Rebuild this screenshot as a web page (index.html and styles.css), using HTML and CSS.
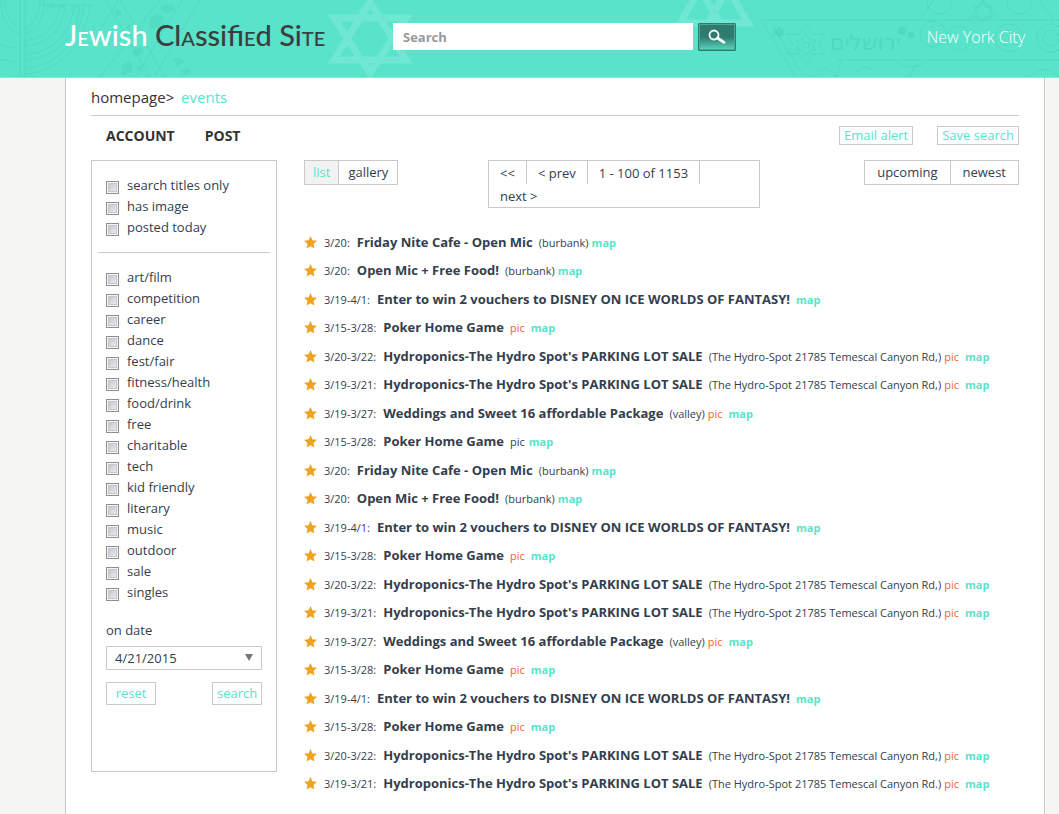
FILE: index.html
```html
<!DOCTYPE html>
<html lang="en">
<head>
<meta charset="utf-8">
<title>Jewish Classified Site</title>
<link rel="stylesheet" href="styles.css">
</head>
<body>
<header class="top">
  <svg class="art art-left" width="420" height="77" viewBox="0 0 420 77" aria-hidden="true">
    <g fill="none" stroke="#43cdb5" stroke-opacity=".35">
      <path d="M20 0v77M25 0v77M1 0c0 20 8 30 19 34M5 0c0 14 6 23 15 28M44 0c0 20-8 30-19 34M40 0c0 14-6 23-15 28M-10 40c8 5 18 8 30 8M25 46c24-2 38-18 40-40M25 41c20-3 33-15 35-35M-10 56c10 4 20 6 30 6M25 60c34-3 52-25 55-55M25 55c30-4 46-22 49-50M25 74c38-4 62-32 65-70M25 69c34-4 56-30 59-65M10 77h25"/>
      <path d="M42 5h50M46 8h6v-5M58 8h6v-5M70 8h6v-5"/>
      <path d="M105 0l45 77M120 0l45 77M200 0l-46 77M182 0l-46 77M118 0l-18 30M100 77l60-77"/>
    </g>
    <g fill="#43cdb5" fill-opacity=".3">
      <circle cx="118" cy="13" r="3"/><circle cx="128" cy="27" r="2"/>
      <path d="M150 18l8-5 6 5-3 6 7 2-5 6-7-5-7 2zM160 6l12-2 2 6-8 3zM132 52l8-6 4 5-8 7zM121 66l8-5 4 5-3 7-8 2zM135 68l6-2 1 6zM173 59l7-2 4 5-6 4zM180 71l8-3 3 5-7 2z"/>
    </g>
    <g class="david">
      <path d="M334 18h72l-36 55zM334 60h72l-36-58z"/>
    </g>
  </svg>
  <svg class="art art-right" width="390" height="77" viewBox="0 0 390 77" aria-hidden="true">
    <g class="david"><path d="M11 23l20-34 20 34zM39 23l20-34 20 34z"/></g>
    <g fill="none" stroke="#43cdb5" stroke-opacity=".35">
      <path d="M92 20h298M92 20l35 57M100 20l33 54M168 60h222M250 20l15-20M385 20l-15-20M300 20l14-20M330 20l-16-20"/>
      <path d="M137 24l6 10h13l-6 10 6 10h-13l-6 11-6-11h-13l6-10-6-10h13zM137 33l4 7h6l-3 5 3 5h-6l-4 6-4-6h-6l3-5-3-5h6z"/>
      <circle cx="137" cy="45" r="3"/><circle cx="270" cy="2" r="12"/><circle cx="350" cy="2" r="12"/>
      <circle cx="264" cy="34" r="13"/><circle cx="290" cy="38" r="12"/><circle cx="340" cy="38" r="14"/><circle cx="340" cy="38" r="8"/><circle cx="382" cy="38" r="14"/><circle cx="382" cy="38" r="8"/>
      <path d="M314 2l3 5h6l-3 5 3 5h-6l-3 5-3-5h-6l3-5-3-5h6zM145 77q10-16 23 0M168 77l4-16M185 73q14-12 20 0M225 61q15 12 35 0M240 77l10-16M360 77q15-15 30 0"/>
    </g>
    <g fill="#43cdb5" fill-opacity=".45"><circle cx="233" cy="31" r="4"/><circle cx="242" cy="35" r="3"/><path d="M110 26l2 3h4l-2 3 2 3h-4l-2 3-2-3h-4l2-3-2-3h4z"/></g>
    <text class="hebrew" x="161" y="50">ירושלים</text>
  </svg>
  <div class="top-inner">
    <h1 class="logo"><span class="logo-light">J<span class="sc">e</span>wish</span> Cl<span class="sc">a</span>ssifi<span class="sc">e</span>d Si<span class="sc">te</span></h1>
    <form class="search" role="search">
      <input class="search-box" type="search" placeholder="Search" aria-label="Search">
      <button class="search-go" type="button" aria-label="Go">
        <svg width="20" height="16" viewBox="0 0 20 16" fill="none" stroke="#fff" aria-hidden="true"><circle cx="7" cy="6" r="4.500" stroke-width="1.800"/><path d="M10.500 9L17 13.300" stroke-width="2.800" stroke-linecap="round"/></svg>
      </button>
    </form>
    <a class="city" href="#">New York City</a>
  </div>
</header>
<main class="page">
  <nav class="crumbs" aria-label="Breadcrumb"><a href="#">homepage</a>&gt; <a class="here" href="#">events</a></nav>
  <div class="bar">
    <nav class="tabs"><a href="#">ACCOUNT</a><a href="#">POST</a></nav>
    <div class="actions"><button class="btn" type="button">Email alert</button><button class="btn" type="button">Save search</button></div>
  </div>
  <div class="columns">
    <form class="filters">
      <div class="checks">
        <label><input type="checkbox">search titles only</label>
        <label><input type="checkbox">has image</label>
        <label><input type="checkbox">posted today</label>
      </div>
      <div class="checks categories">
        <label><input type="checkbox">art/film</label>
        <label><input type="checkbox">competition</label>
        <label><input type="checkbox">career</label>
        <label><input type="checkbox">dance</label>
        <label><input type="checkbox">fest/fair</label>
        <label><input type="checkbox">fitness/health</label>
        <label><input type="checkbox">food/drink</label>
        <label><input type="checkbox">free</label>
        <label><input type="checkbox">charitable</label>
        <label><input type="checkbox">tech</label>
        <label><input type="checkbox">kid friendly</label>
        <label><input type="checkbox">literary</label>
        <label><input type="checkbox">music</label>
        <label><input type="checkbox">outdoor</label>
        <label><input type="checkbox">sale</label>
        <label><input type="checkbox">singles</label>
      </div>
      <div class="date">
        <label for="date">on date</label>
        <div class="select-wrap">
          <select id="date"><option>4/21/2015</option></select>
          <svg class="arrow" width="8" height="7" viewBox="0 0 8 7" aria-hidden="true"><path d="M0 0h8L4 7z" fill="#777"/></svg>
        </div>
        <div class="date-buttons"><button class="btn" type="reset">reset</button><button class="btn" type="button">search</button></div>
      </div>
    </form>
    <section class="results">
      <div class="controls">
        <div class="group view"><button class="on" type="button">list</button><button type="button">gallery</button></div>
        <nav class="pager" aria-label="Pages"><a href="#">&lt;&lt;</a><a href="#">&lt; prev</a><span>1 - 100 of 1153</span><a href="#">next &gt;</a></nav>
        <div class="group sort"><button type="button">upcoming</button><button type="button">newest</button></div>
      </div>
      <svg width="0" height="0" class="defs" aria-hidden="true"><symbol id="star" viewBox="0 0 13 13"><path d="M6.500 0l1.900 4.300 4.600.5-3.500 3.100 1 4.700-4-2.400-4 2.400 1-4.700L0 4.800l4.600-.5z" fill="#f0a323"/></symbol></svg>
      <ul class="list" id="list"></ul>
    </section>
  </div>
</main>
<script src="events.js"></script>
</body>
</html>
```
FILE: styles.css
```css
* { box-sizing: border-box; }
body {
  margin: 0;
  min-height: 100vh;
  display: flex;
  flex-direction: column;
  background: #f5f6f1;
  color: #333;
  font: 13px/21px "Open Sans", "Noto Sans", sans-serif;
}
a { color: inherit; text-decoration: none; }
button, input, select { font: inherit; color: inherit; }
button { cursor: pointer; }

.top {
  position: relative;
  height: 78px;
  overflow: hidden;
  background: #58e3ca;
  border-bottom: 1px solid #c9c9c9;
}
.art { position: absolute; top: 0; }
.art-left { left: 0; }
.art-right { right: 0; }
.david { fill: none; stroke: #fff; stroke-width: 7px; opacity: .15; }
.hebrew { font: 22px "DejaVu Sans", sans-serif; fill: #43cdb5; fill-opacity: .45; }
.top-inner {
  position: relative;
  max-width: 980px;
  height: 74px;
  margin: 0 14px 0 65px;
  padding-right: 20px;
  display: flex;
  align-items: center;
}
.logo {
  width: 328px;
  margin: 0;
  padding-bottom: 4px;
  color: #3d3d3d;
  font: 500 29px/36px Lato, sans-serif;
  white-space: nowrap;
}
.logo-light { color: #fff; }
.sc { font-variant-caps: small-caps; }
.search { display: flex; gap: 5px; }
.search-box {
  width: 300px;
  height: 27px;
  padding: 0 10px;
  border: 0;
  border-radius: 0;
  background: #fff;
  appearance: none;
}
.search-box::placeholder { color: #999; font-weight: 700; opacity: 1; }
.search-go {
  width: 38px;
  height: 28px;
  padding: 0;
  border: 1px solid #24806f;
  border-radius: 1px;
  background: linear-gradient(#2f7a6e 50%, #58d8c1);
  box-shadow: inset 0 0 0 1px #4fa596;
  display: grid;
  place-items: center;
}
.city { margin-left: auto; color: #fff; font-size: 16px; font-weight: 300; }

.page {
  flex: 1;
  max-width: 980px;
  margin: 0 14px 0 65px;
  padding: 5px 25px 15px;
  background: #fff;
  border: solid #c9c9c9;
  border-width: 0 1px;
}
.crumbs {
  height: 33px;
  border-bottom: 1px solid #c9c9c9;
  font-size: 15px;
  line-height: 28px;
}
.here { color: #58e3ca; margin-left: 3px; }
.bar { display: flex; justify-content: space-between; align-items: center; height: 38px; }
.tabs { display: flex; gap: 30px; padding-left: 15px; font-size: 14px; font-weight: 700; }
.actions { display: flex; gap: 24px; }
.btn {
  padding: 0 4px;
  border: 1px solid #c9c9c9;
  background: #fff;
  color: #58e3ca;
  line-height: 17px;
}
.columns { display: grid; grid-template-columns: 186px 1fr; gap: 27px; align-items: start; margin-top: 6px; color: #333e4e; }

.filters { height: 612px; padding: 14px 6px; border: 1px solid #c9c9c9; }
.checks { padding: 0 8px 14px; display: flex; flex-direction: column; }
.checks label { display: flex; gap: 8px; }
.checks input {
  appearance: none;
  width: 13px;
  height: 13px;
  margin: 6px 0 0;
  border: 1px solid #8e8f8f;
  background: linear-gradient(135deg, #b8bec8, #f4f4f4);
  box-shadow: inset 0 0 0 1px #f4f4f4, inset 0 0 0 2px #c4c8cc;
}
.checks input:checked { background: #58e3ca; }
.categories { border-top: 1px solid #c9c9c9; padding-top: 14px; }
.date { padding: 3px 8px; display: flex; flex-direction: column; gap: 5px; }
.select-wrap { position: relative; }
.select-wrap select {
  appearance: none;
  display: block;
  width: 100%;
  height: 24px;
  padding: 0 8px;
  border: 1px solid #c9c9c9;
  border-radius: 0;
  background: #fff;
}
.arrow { position: absolute; right: 9px; top: 8px; pointer-events: none; }
.date-buttons { display: flex; justify-content: space-between; padding-top: 7px; }
.date-buttons .btn { width: 50px; height: 23px; line-height: 21px; }

.controls { display: grid; grid-template-columns: 184px 272px 1fr; align-items: start; height: 68px; }
.group { display: flex; justify-self: start; border: 1px solid #c9c9c9; }
.group button { height: 23px; padding: 0 9px; border: 0; background: #fff; }
.group button + button { border-left: 1px solid #c9c9c9; }
.group .on { background: #f2f2f2; color: #58e3ca; padding: 0 8px; }
.sort { justify-self: end; }
.sort button { padding: 0 12px; }
.pager { display: flex; flex-wrap: wrap; border: 1px solid #c9c9c9; }
.pager > * { height: 23px; padding: 0 11px; line-height: 25px; border-right: 1px solid #c9c9c9; }
.pager > :last-child { border-right: 0; }
.defs { display: block; }
.list { margin: 0; padding: 0; list-style: none; }
.list li { display: flex; align-items: center; height: 28px; font-size: 11px; white-space: nowrap; }
.list li:nth-child(even) { height: 29px; }
.star { width: 13px; height: 13px; margin-right: 7px; }
.title { margin: 0 6px 0 7px; font-size: 13px; font-weight: 700; }
.place { margin-right: 3px; }
.pic { margin-right: 6px; color: #f26522; }
.plain { margin-right: 4px; color: inherit; }
.map { color: #58e3ca; font-weight: 700; }
```
FILE: events.js
```js
const cafe = ["3/20:", "Friday Nite Cafe - Open Mic", "(burbank)", ""];
const food = ["3/20:", "Open Mic + Free Food!", "(burbank)", ""];
const disney = ["3/19-4/1:", "Enter to win 2 vouchers to DISNEY ON ICE WORLDS OF FANTASY!", "", ""];
const poker = ["3/15-3/28:", "Poker Home Game", "", "pic"];
const pokerPlain = ["3/15-3/28:", "Poker Home Game", "", "pic plain"];
const hydro = (date, end) => [date, "Hydroponics-The Hydro Spot's PARKING LOT SALE", "(The Hydro-Spot 21785 Temescal Canyon Rd" + end + ")", "pic"];
const wedding = ["3/19-3/27:", "Weddings and Sweet 16 affordable Package", "(valley)", "pic"];

const events = [
  cafe, food, disney, poker, hydro("3/20-3/22:", ","), hydro("3/19-3/21:", ","), wedding, pokerPlain,
  cafe, food, disney, poker, hydro("3/20-3/22:", ","), hydro("3/19-3/21:", "."), wedding, poker,
  disney, poker, hydro("3/20-3/22:", ","), hydro("3/19-3/21:", ".")
];

document.getElementById("list").innerHTML = events.map(([date, title, place, pic]) =>
  `<li><svg class="star" aria-hidden="true"><use href="#star"/></svg><span>${date}</span><a class="title" href="#">${title}</a>` +
  (place ? `<span class="place">${place}</span>` : "") +
  (pic ? `<a class="${pic}" href="#">pic</a>` : "") +
  `<a class="map" href="#">map</a></li>`).join("");
```
